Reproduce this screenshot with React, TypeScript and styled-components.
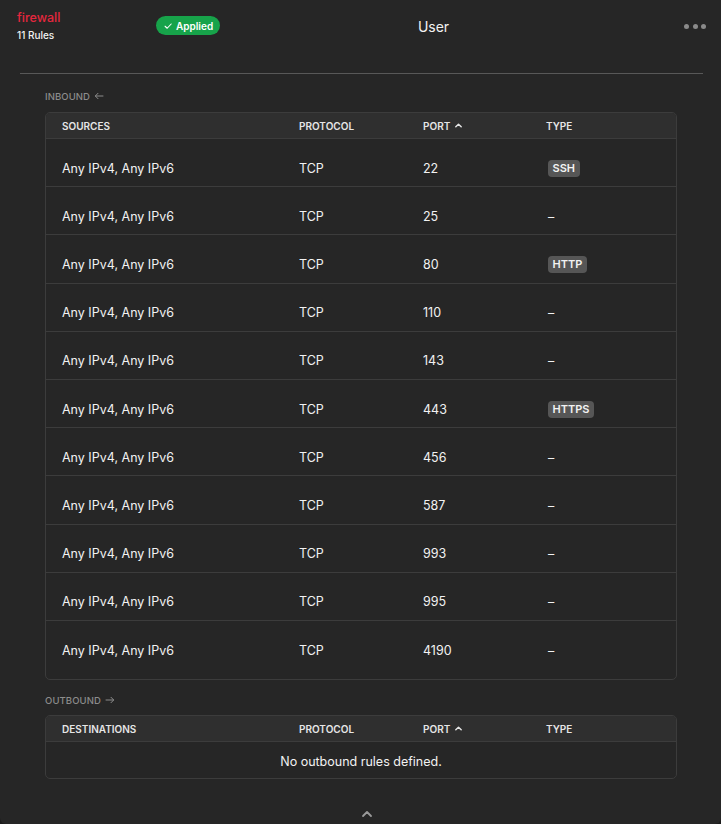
import React from "react";
import styled, { createGlobalStyle } from "styled-components";

const Global = createGlobalStyle`
  html, body { margin: 0; padding: 0; background: #1b1b1b; }
  body { font-family: Inter, "Noto Sans", Arial, sans-serif; -webkit-font-smoothing: antialiased; }
  * { box-sizing: border-box; }
`;

const Panel = styled.div`
  width: 721px;
  height: 824px;
  background: #262626;
  border-radius: 0 0 6px 6px;
  display: flex;
  flex-direction: column;
  color: #f2f2f2;
  overflow: hidden;
`;

const Header = styled.header`
  display: grid;
  grid-template-columns: 139px 1fr auto;
  align-items: start;
  padding: 10px 15px 0 17px;
  height: 52px;
  position: relative;
`;

const TitleBlock = styled.div`
  display: flex;
  flex-direction: column;
  gap: 3px;
`;

const Title = styled.div`
  color: #e5263e;
  font-size: 12.5px;
  font-weight: 500;
  line-height: 16px;
`;

const Sub = styled.div`
  color: #f2f2f2;
  font-size: 10px;
  font-weight: 500;
  line-height: 13px;
`;

const Applied = styled.span`
  justify-self: start;
  margin-top: 6px;
  display: inline-flex;
  align-items: center;
  gap: 3px;
  height: 19px;
  padding: 0 7px 0 7px;
  border-radius: 10px;
  background: #17a34a;
  color: #fff;
  font-size: 10px;
  font-weight: 600;
`;

const Center = styled.div`
  position: absolute;
  left: 0;
  right: 0;
  top: 18px;
  text-align: center;
  font-size: 14px;
  font-weight: 400;
  color: #f2f2f2;
  padding-left: 146px;
  pointer-events: none;
`;

const Dots = styled.div`
  display: flex;
  gap: 3.5px;
  margin-top: 14px;
`;

const Dot = styled.span`
  width: 5px;
  height: 5px;
  border-radius: 50%;
  background: #8a8a8a;
`;

const Divider = styled.hr`
  margin: 21px 18px 0 20px;
  border: 0;
  border-top: 1px solid #585858;
`;

const Body = styled.div`
  padding: 0 44px 0 45px;
  display: flex;
  flex-direction: column;
`;

const SectionLabel = styled.div<{ $top: number }>`
  margin-top: ${(p) => p.$top}px;
  height: 16px;
  display: flex;
  align-items: center;
  gap: 4px;
  font-size: 9.5px;
  font-weight: 500;
  color: #8c8c8c;
  letter-spacing: 0.1px;
`;

const Table = styled.div<{ $pad: number; $top: number }>`
  margin-top: ${(p) => p.$top}px;
  border: 1px solid #3c3c3c;
  border-radius: 5px;
  overflow: hidden;
  padding-bottom: ${(p) => p.$pad}px;
`;

const Cols = "237px 124px 123px 1fr";

const HeadRow = styled.div`
  display: grid;
  grid-template-columns: ${Cols};
  align-items: center;
  height: 26px;
  padding-left: 16px;
  background: #2f2f2f;
  border-bottom: 1px solid #3c3c3c;
  font-size: 10px;
  font-weight: 600;
  color: #e6e6e6;
`;

const HeadCell = styled.div`
  display: flex;
  align-items: center;
  gap: 4px;
`;

const Row = styled.div`
  display: grid;
  grid-template-columns: ${Cols};
  align-items: center;
  height: 48.2px;
  padding: 11px 0 0 16px;
  font-size: 12.5px;
  color: #f2f2f2;
  border-bottom: 1px solid #3c3c3c;
  &:last-child { border-bottom: 0; }
`;

const Badge = styled.span`
  justify-self: start;
  margin-left: 2px;
  display: inline-flex;
  align-items: center;
  height: 17px;
  padding: 0 4.5px;
  border-radius: 4px;
  background: #565656;
  color: #f2f2f2;
  font-size: 11px;
  font-weight: 600;
`;

const Dash = styled.span`
  margin-left: 2px;
  font-size: 12.5px;
`;

const Empty = styled.div`
  height: 36px;
  padding-top: 2px;
  display: flex;
  align-items: center;
  justify-content: center;
  font-size: 12.5px;
  color: #f2f2f2;
`;

const Footer = styled.div`
  margin-top: auto;
  display: flex;
  justify-content: center;
  padding: 0 0 5px 12px;
  color: #9a9a9a;
`;

const SortUp = () => (
  <svg width="9" height="9" viewBox="0 0 10 10" fill="none">
    <path d="M2 6.5 L5 3.5 L8 6.5" stroke="#e6e6e6" strokeWidth="1.6" strokeLinecap="round" strokeLinejoin="round" />
  </svg>
);

const CheckIcon = () => (
  <svg width="10" height="10" viewBox="0 0 12 12" fill="none">
    <path d="M2.5 6.3 L5 8.7 L9.8 3.6" stroke="#fff" strokeWidth="1.3" strokeLinecap="round" strokeLinejoin="round" />
  </svg>
);

const ArrowIcon = ({ dir }: { dir: "left" | "right" }) => (
  <svg width="10" height="8" viewBox="0 0 10 8" fill="none">
    {dir === "left" ? (
      <path d="M9 4 H1.5 M4 1.3 L1.3 4 L4 6.7" stroke="#8c8c8c" strokeWidth="1" strokeLinecap="round" strokeLinejoin="round" />
    ) : (
      <path d="M1 4 H8.5 M6 1.3 L8.7 4 L6 6.7" stroke="#8c8c8c" strokeWidth="1" strokeLinecap="round" strokeLinejoin="round" />
    )}
  </svg>
);

const ChevronUp = () => (
  <svg width="14" height="10" viewBox="0 0 14 10" fill="none">
    <path d="M3 7 L7 3 L11 7" stroke="#9a9a9a" strokeWidth="1.8" strokeLinecap="round" strokeLinejoin="round" />
  </svg>
);

const rules: { port: string; type?: string }[] = [
  { port: "22", type: "SSH" },
  { port: "25" },
  { port: "80", type: "HTTP" },
  { port: "110" },
  { port: "143" },
  { port: "443", type: "HTTPS" },
  { port: "456" },
  { port: "587" },
  { port: "993" },
  { port: "995" },
  { port: "4190" },
];

const TableHead = ({ first }: { first: string }) => (
  <HeadRow>
    <HeadCell>{first}</HeadCell>
    <HeadCell>PROTOCOL</HeadCell>
    <HeadCell>
      PORT <SortUp />
    </HeadCell>
    <HeadCell>TYPE</HeadCell>
  </HeadRow>
);

export default function App() {
  return (
    <>
      <Global />
      <Panel>
        <Header>
          <TitleBlock>
            <Title>firewall</Title>
            <Sub>11 Rules</Sub>
          </TitleBlock>
          <Applied>
            <CheckIcon />
            Applied
          </Applied>
          <Dots>
            <Dot />
            <Dot />
            <Dot />
          </Dots>
          <Center>User</Center>
        </Header>
        <Divider />
        <Body>
          <SectionLabel $top={14}>
            INBOUND <ArrowIcon dir="left" />
          </SectionLabel>
          <Table $pad={10} $top={8}>
            <TableHead first="SOURCES" />
            {rules.map((r) => (
              <Row key={r.port}>
                <div>Any IPv4, Any IPv6</div>
                <div>TCP</div>
                <div>{r.port}</div>
                {r.type ? <Badge>{r.type}</Badge> : <Dash>–</Dash>}
              </Row>
            ))}
          </Table>
          <SectionLabel $top={12}>
            OUTBOUND <ArrowIcon dir="right" />
          </SectionLabel>
          <Table $pad={0} $top={7}>
            <TableHead first="DESTINATIONS" />
            <Empty>No outbound rules defined.</Empty>
          </Table>
        </Body>
        <Footer>
          <ChevronUp />
        </Footer>
      </Panel>
    </>
  );
}
